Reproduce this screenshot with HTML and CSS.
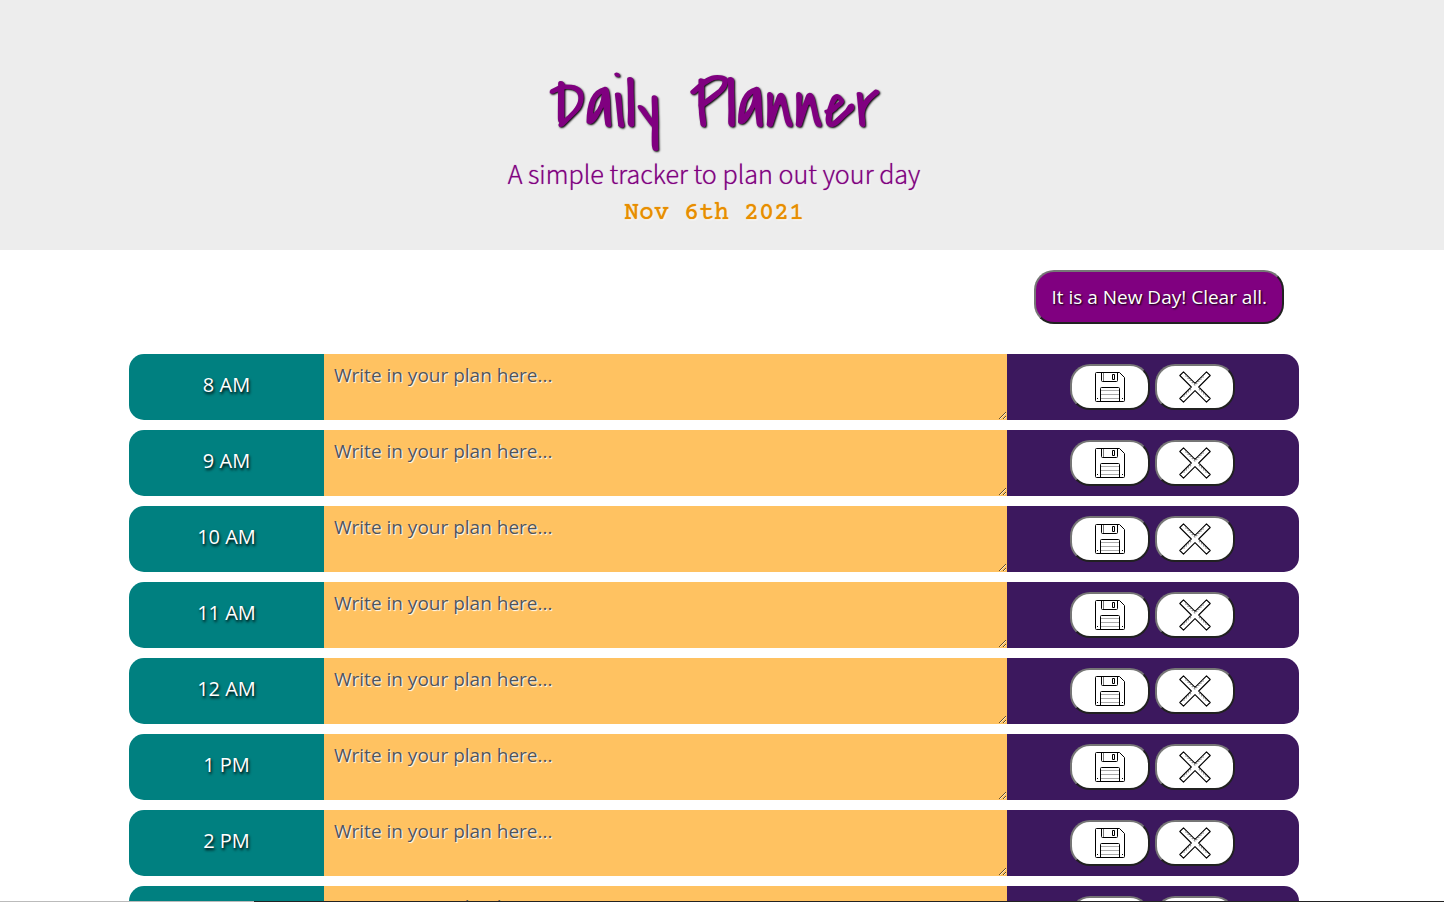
FILE: index.html
```html
<!DOCTYPE html>
<html lang="en">
<head>
<meta charset="utf-8">
<meta name="viewport" content="width=device-width, initial-scale=1">
<title>Daily Planner</title>
<link rel="stylesheet" href="styles.css">
</head>
<body>
<svg class="sprite" aria-hidden="true">
  <symbol id="disk" viewBox="0 0 32 32">
    <g fill="none" stroke="#000" stroke-linejoin="round">
      <path d="M2.500 1.500H25.500L30.500 6.500V29.500Q30.500 30.500 29.500 30.500H2.500Q1.500 30.500 1.500 29.500V2.500Q1.500 1.500 2.500 1.500Z"/>
      <path d="M7.500 1.500V9.500Q7.500 10.500 8.500 10.500H22.500Q23.500 10.500 23.500 9.500V1.500"/>
      <path d="M18.500 3.500H20.500V8.500H18.500Z"/>
      <path d="M6.500 30.500V17.500Q6.500 16.500 7.500 16.500H24.500Q25.500 16.500 25.500 17.500V30.500"/>
      <path d="M3 27.500H4M28 27.500H29"/>
    </g>
    <path d="M9.500 2V10" stroke="#777" fill="none"/>
    <path d="M7 19.500H25M7 23.500H25M7 27.500H25" stroke="#aaa" fill="none"/>
  </symbol>
  <symbol id="cross" viewBox="0 0 32 32">
    <path d="M4.500 .8L16 12.300L27.500 .8L31.200 4.500L19.700 16L31.200 27.500L27.500 31.200L16 19.700L4.500 31.200L.8 27.500L12.300 16L.8 4.500Z" fill="none" stroke="#000" stroke-width="1.100" stroke-linejoin="round"/>
    <path d="M6.500 4.500L16 14L25.500 4.500M4.500 25.500L13 17M27.500 25.500L19 17" fill="none" stroke="#999" stroke-width="1.500" stroke-dasharray="1.500 1.500"/>
  </symbol>
</svg>
<div class="page">
  <header class="banner">
    <h1 class="title">Daily Planner</h1>
    <p class="lead">A simple tracker to plan out your day</p>
    <p class="date">Nov 6th 2021</p>
  </header>
  <main class="content">
    <div class="planner">
      <div class="toolbar"><button class="clear" type="button">It is a New Day! Clear all.</button></div>
      <div class="rows" id="rows"></div>
    </div>
  </main>
</div>
<div class="edge"></div>
<script src="planner.js"></script>
</body>
</html>
```
FILE: planner.js
```js
const hours = ["8 AM", "9 AM", "10 AM", "11 AM", "12 AM", "1 PM", "2 PM", "3 PM"];
document.getElementById("rows").innerHTML = hours.map((hour, i) => `
  <div class="row">
    <label class="hour" for="plan-${i}">${hour}</label>
    <textarea class="plan" id="plan-${i}" placeholder="Write in your plan here..."></textarea>
    <div class="actions">
      <button class="action" type="button" aria-label="Save ${hour}"><svg class="icon"><use href="#disk"/></svg></button>
      <button class="action" type="button" aria-label="Clear ${hour}"><svg class="icon"><use href="#cross"/></svg></button>
    </div>
  </div>`).join("");
```
FILE: styles.css
```css
* { box-sizing: border-box; }
body {
  margin: 0;
  background: #fff;
  font-family: "Open Sans", "Noto Sans", sans-serif;
  font-size: 19px;
  line-height: 30px;
}
.sprite { position: absolute; width: 0; height: 0; }
.page {
  height: 100vh;
  overflow-y: auto;
  scrollbar-width: none;
}
.banner {
  padding: 60px 16px 20px 0;
  background: #ededed;
  text-align: center;
}
.title {
  margin: 0;
  font: 500 72px/92px "Covered By Your Grace", "Reenie Beanie", Lato, sans-serif;
  color: purple;
  text-shadow: 1px 1px 2px #000;
}
.lead {
  margin: 0;
  font: 300 28px/46px "Source Sans Pro", "Source Sans 3", "Noto Sans CJK SC", sans-serif;
  color: purple;
  text-shadow: 0 0 1px purple, 1px 1px 2px #fff;
}
.date {
  margin: 0;
  font: 500 25px/32px "Courier Prime", "Courier New", "Liberation Mono", monospace;
  color: #e88e00;
  text-shadow: 0 0 1px #e88e00, 1px 1px 2px #fff;
}
.content { padding-right: 16px; }
.planner {
  max-width: 1200px;
  margin: 0 auto;
  padding: 20px 15px;
}
.toolbar {
  display: flex;
  justify-content: flex-end;
  padding: 0 15px 30px;
}
.clear {
  height: 54px;
  padding: 0 15px;
  border: 2px outset #767676;
  border-radius: 20px;
  background: purple;
  color: #fff;
  font: inherit;
  text-shadow: 1px 1px 2px #000;
}
.rows { display: grid; gap: 10px; }
.row {
  display: grid;
  grid-template-columns: 2fr 7fr 3fr;
  height: 66px;
  border-radius: 15px;
  overflow: hidden;
}
.hour {
  padding: 16px 0;
  background: teal;
  color: #fff;
  font-size: 20px;
  text-align: center;
  text-shadow: 1px 2px 3px #000;
}
.plan {
  width: 100%;
  height: 100%;
  padding: 6px 10px;
  border: 0;
  background: #ffc261;
  color: #333;
  font: inherit;
  text-shadow: 1px 1px 1px #fff;
}
.plan::placeholder { color: #4f555c; }
.actions {
  display: flex;
  align-items: center;
  justify-content: center;
  gap: 5px;
  background: #3c185e;
}
.action {
  display: grid;
  place-items: center;
  width: 80px;
  height: 46px;
  padding: 0;
  border: 2px outset #767676;
  border-radius: 20px;
  background: #fff;
}
.icon { width: 32px; height: 32px; }
.edge {
  position: fixed;
  inset: auto 0 0;
  height: 1px;
  background: linear-gradient(to right, #bbb 254px, #222 254px);
}
```
